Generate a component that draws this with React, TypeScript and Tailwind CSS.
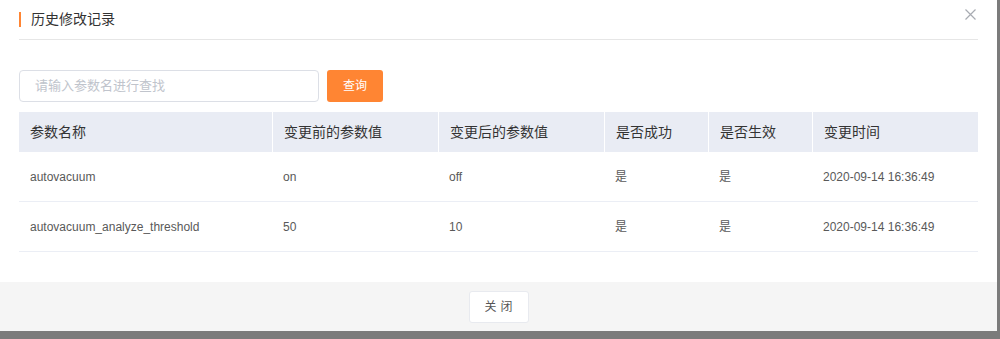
import React from "react";

const cols = [
  { label: "参数名称", w: "w-[253px]" },
  { label: "变更前的参数值", w: "w-[166px]" },
  { label: "变更后的参数值", w: "w-[166px]" },
  { label: "是否成功", w: "w-[104px]" },
  { label: "是否生效", w: "w-[104px]" },
  { label: "变更时间", w: "flex-1" },
];

const rows = [
  ["autovacuum", "on", "off", "是", "是", "2020-09-14 16:36:49"],
  ["autovacuum_analyze_threshold", "50", "10", "是", "是", "2020-09-14 16:36:49"],
];

export default function App() {
  return (
    <div
      className="w-[1000px] h-[339px] bg-[#7b7b7b] flex flex-col"
      style={{ fontFamily: '"Liberation Sans", Arial, "Noto Sans CJK SC", sans-serif' }}
    >
      <div className="w-[997px] h-[331px] bg-white flex flex-col">
        <div className="flex-1 px-[19px]">
          <div className="h-[40px] flex items-center border-b border-[#e6e6e6] relative">
            <div className="w-[2px] h-[15px] bg-[#ff8533]" />
            <div className="ml-[10px] text-[14px] text-[#333] leading-none mt-[-1px]">历史修改记录</div>
            <svg
              className="absolute right-[2px] top-[9px]"
              width="11"
              height="11"
              viewBox="0 0 11 11"
            >
              <path d="M0.5 0.5 L10.5 10.5 M10.5 0.5 L0.5 10.5" stroke="#a8abb2" strokeWidth="1.2" />
            </svg>
          </div>
          <div className="mt-[30px] flex items-center gap-[8px]">
            <div className="w-[300px] h-[32px] border border-[#dcdfe6] rounded-[4px] flex items-center px-[15px] text-[13px] text-[#c0c4cc]">
              请输入参数名进行查找
            </div>
            <div className="w-[56px] h-[32px] rounded-[3px] bg-[#ff8533] text-white text-[12px] flex items-center justify-center">
              查询
            </div>
          </div>
          <div className="mt-[10px] w-[959px]">
            <div className="flex h-[40px] bg-[#e9ecf4]">
              {cols.map((c, i) => (
                <div
                  key={i}
                  className={`${c.w} ${i > 0 ? "border-l border-white pl-[11px]" : "pl-[11px]"} flex items-center text-[14px] text-[#333]`}
                >
                  {c.label}
                </div>
              ))}
            </div>
            {rows.map((r, ri) => (
              <div key={ri} className="flex h-[50px] border-b border-[#ebeef5]">
                {r.map((v, i) => (
                  <div
                    key={i}
                    className={`${cols[i].w} ${i > 0 ? "border-l border-transparent pl-[10px]" : "pl-[11px]"} flex items-center text-[12px] text-[#595959]`}
                  >
                    {v}
                  </div>
                ))}
              </div>
            ))}
          </div>
        </div>
        <div className="h-[49px] bg-[#f5f5f5] flex items-center justify-center">
          <div className="w-[60px] h-[32px] bg-white border border-[#e8eaef] rounded-[3px] flex items-center justify-center text-[12px] text-[#555] tracking-[4px] pl-[4px]">
            关闭
          </div>
        </div>
      </div>
    </div>
  );
}
